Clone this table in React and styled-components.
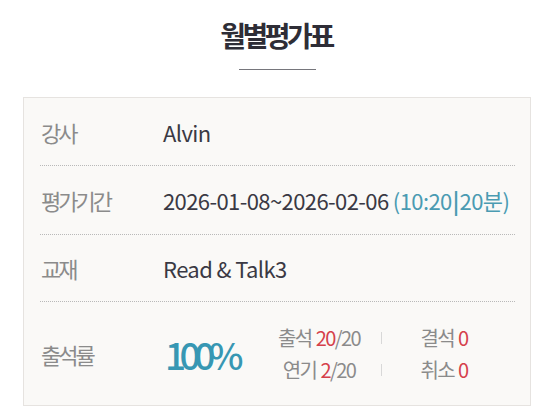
import React from "react";
import styled, { createGlobalStyle } from "styled-components";

const Global = createGlobalStyle`
  html, body { margin: 0; padding: 0; background: #ffffff; }
  body { font-family: "Noto Sans CJK KR", "Noto Sans", sans-serif; }
`;

const Page = styled.div`
  width: 556px;
  height: 416px;
  box-sizing: border-box;
  padding: 14px 25px 0 23px;
  display: flex;
  flex-direction: column;
  align-items: center;
`;

const Title = styled.h1`
  margin: 0;
  font-size: 28px;
  font-weight: 700;
  color: #2e2d36;
  letter-spacing: -3.5px;
  line-height: 42px;
  padding-right: 2px;
`;

const TitleRule = styled.div`
  width: 77px;
  height: 1px;
  background: #76767c;
  margin-top: 13px;
  margin-bottom: 27px;
`;

const Card = styled.div`
  align-self: stretch;
  background: #faf9f7;
  border: 1px solid #e6e3e0;
  padding: 0 15px 0 16px;
`;

const Row = styled.div`
  display: grid;
  grid-template-columns: 123px 1fr;
  align-items: center;
  height: ${(p) => p.$h}px;
  border-bottom: ${(p) => (p.$last ? "none" : "1px dotted #b9b9b9")};
`;

const Label = styled.div`
  font-size: 22px;
  color: #8b8b8b;
  letter-spacing: -3px;
  padding-left: 1px;
`;

const Value = styled.div`
  font-size: 22px;
  color: #3a3944;
  letter-spacing: -0.6px;
  white-space: nowrap;
`;

const Accent = styled.span`
  color: #4a9bb2;
`;

const Bar = styled.span`
  font-weight: 700;
  margin: 0 1px;
`;

const Attendance = styled.div`
  display: flex;
  align-items: center;
`;

const Rate = styled.div`
  font-size: 37px;
  font-weight: 500;
  color: #3797b3;
  letter-spacing: -6.5px;
  width: 111px;
  padding-left: 2px;
  box-sizing: border-box;
`;

const Stats = styled.div`
  display: grid;
  grid-template-columns: 90px 1px 90px;
  column-gap: 17px;
  row-gap: 3px;
  align-items: center;
  justify-items: center;
`;

const Stat = styled.div`
  font-size: 20px;
  color: #8b8b8b;
  letter-spacing: -1.6px;
  white-space: nowrap;
`;

const Num = styled.span`
  color: #d5404b;
  margin-left: 4px;
`;

const Divider = styled.span`
  width: 1px;
  height: 12px;
  background: #d8d8d8;
`;

export default function App() {
  return (
    <>
      <Global />
      <Page>
        <Title>월별평가표</Title>
        <TitleRule />
        <Card>
          <Row $h={67}>
            <Label>강사</Label>
            <Value>Alvin</Value>
          </Row>
          <Row $h={68}>
            <Label>평가기간</Label>
            <Value>
              2026-01-08~2026-02-06{" "}
              <Accent>
                (10:20<Bar>|</Bar>20분)
              </Accent>
            </Value>
          </Row>
          <Row $h={66}>
            <Label>교재</Label>
            <Value>Read &amp; Talk3</Value>
          </Row>
          <Row $h={103} $last>
            <Label>출석률</Label>
            <Attendance>
              <Rate>100%</Rate>
              <Stats>
                <Stat>
                  출석<Num>20</Num>/20
                </Stat>
                <Divider />
                <Stat>
                  결석<Num>0</Num>
                </Stat>
                <Stat>
                  연기<Num>2</Num>/20
                </Stat>
                <Divider />
                <Stat>
                  취소<Num>0</Num>
                </Stat>
              </Stats>
            </Attendance>
          </Row>
        </Card>
      </Page>
    </>
  );
}
